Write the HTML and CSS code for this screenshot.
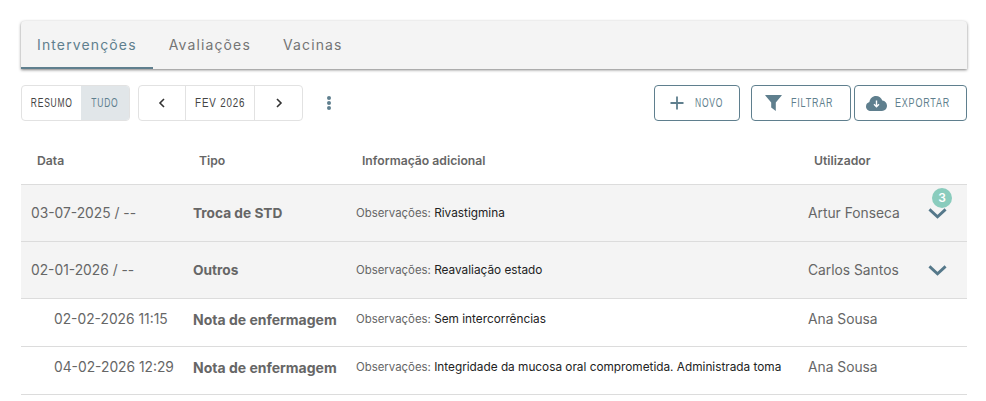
FILE: index.html
```html
<!DOCTYPE html>
<html>
<head>
    <meta charset="UTF-8">
    <link rel="stylesheet" href="styles.css">
</head>
<body>
<div class="tabs">
    <div class="tab tab-active">Intervenções</div>
    <div class="tab">Avaliações</div>
    <div class="tab">Vacinas</div>
</div>

<div class="toolbar">
    <div class="group">
        <div class="seg seg-resumo"><span class="cond">RESUMO</span></div>
        <div class="seg seg-tudo"><span class="cond">TUDO</span></div>
    </div>
    <div class="group group-date">
        <div class="seg seg-prev">
            <svg width="8" height="10" viewBox="0 0 8 10"><path d="M6 1 L2 5 L6 9" fill="none" stroke="#333" stroke-width="1.6"/></svg>
        </div>
        <div class="seg seg-month"><span class="cond cond-month">FEV 2026</span></div>
        <div class="seg seg-next">
            <svg width="8" height="10" viewBox="0 0 8 10"><path d="M2 1 L6 5 L2 9" fill="none" stroke="#333" stroke-width="1.6"/></svg>
        </div>
    </div>
    <div class="dots"><span></span><span></span><span></span></div>
    <div class="actions">
        <div class="btn btn-novo">
            <svg width="14" height="14" viewBox="0 0 14 14"><path d="M7 0.5 V13.5 M0.5 7 H13.5" stroke="#5f7f8e" stroke-width="1.8" fill="none"/></svg>
            <span class="cond cond-left">NOVO</span>
        </div>
        <div class="btn btn-filtrar">
            <svg width="17" height="16" viewBox="0 0 17 16"><path d="M0.5 0 H16.5 Q17 0 16.7 0.6 L10.8 7.5 V16 L6.2 12.5 V7.5 L0.3 0.6 Q0 0 0.5 0 Z" fill="#5f7f8e"/></svg>
            <span class="cond cond-left cond-wide">FILTRAR</span>
        </div>
        <div class="btn btn-exportar">
            <svg width="21" height="15" viewBox="0 0 21 15"><path d="M5 15 C2 15 0 13 0 10.4 C0 8.2 1.4 6.6 3.4 6 C3.9 2.6 6.6 0 10 0 C13 0 15.4 1.9 16.3 4.6 C19 4.9 21 7 21 9.8 C21 12.8 18.8 15 16 15 Z" fill="#5f7f8e"/><path d="M10.5 4.5 V10.5 M8 8.2 L10.5 10.7 L13 8.2" fill="none" stroke="#fff" stroke-width="1.4"/></svg>
            <span class="cond cond-left cond-wide">EXPORTAR</span>
        </div>
    </div>
</div>

<div class="row-head">
    <div class="c-data">Data</div>
    <div class="c-tipo">Tipo</div>
    <div class="c-info">Informação adicional</div>
    <div class="c-user">Utilizador</div>
</div>

<div class="row row-group">
    <div class="c-data">03-07-2025 / --</div>
    <div class="c-tipo">Troca de STD</div>
    <div class="c-info"><span class="lbl">Observações:</span> Rivastigmina</div>
    <div class="c-user">Artur Fonseca</div>
    <div class="c-toggle">
        <span class="badge">3</span>
        <svg width="20" height="11" viewBox="0 0 20 11"><path d="M1.5 1.2 L10 9 L18.5 1.2" fill="none" stroke="#55788a" stroke-width="3"/></svg>
    </div>
</div>
<div class="row row-group">
    <div class="c-data">02-01-2026 / --</div>
    <div class="c-tipo">Outros</div>
    <div class="c-info"><span class="lbl">Observações:</span> Reavaliação estado</div>
    <div class="c-user">Carlos Santos</div>
    <div class="c-toggle">
        <svg width="20" height="11" viewBox="0 0 20 11"><path d="M1.5 1.2 L10 9 L18.5 1.2" fill="none" stroke="#55788a" stroke-width="3"/></svg>
    </div>
</div>
<div class="row row-child">
    <div class="c-data">02-02-2026 11:15</div>
    <div class="c-tipo">Nota de enfermagem</div>
    <div class="c-info"><span class="lbl">Observações:</span> Sem intercorrências</div>
    <div class="c-user">Ana Sousa</div>
</div>
<div class="row row-child">
    <div class="c-data">04-02-2026 12:29</div>
    <div class="c-tipo">Nota de enfermagem</div>
    <div class="c-info"><span class="lbl">Observações:</span> Integridade da mucosa oral comprometida. Administrada toma</div>
    <div class="c-user">Ana Sousa</div>
</div>
</body>
</html>
```

FILE: styles.css
```css
* {
    margin: 0;
    padding: 0;
    box-sizing: border-box;
}

body {
    padding: 21px 19px 0 21px;
    background-color: #fff;
    font-family: "Inter", "Noto Sans", sans-serif;
    color: #666;
}

.tabs {
    display: flex;
    height: 48px;
    background-color: #f4f4f4;
    border-radius: 4px 4px 0 0;
    box-shadow: 0 1px 3px rgba(0, 0, 0, 0.5);
}

.tab {
    padding: 0 16px;
    line-height: 47px;
    font-size: 14px;
    letter-spacing: 1.13px;
    color: #757575;
}

.tab-active {
    color: #5f7f8e;
    border-bottom: 2px solid #5f7f8e;
}

.toolbar {
    display: flex;
    align-items: center;
    height: 36px;
    margin-top: 16px;
    font-family: "Liberation Sans", sans-serif;
    font-size: 12.5px;
    letter-spacing: 1.1px;
}

/* no condensed font installed, so squeeze the labels */
.cond {
    display: inline-block;
    white-space: nowrap;
    transform: scaleX(0.68);
}

.cond-month {
    transform: scaleX(0.78);
}

.cond-wide {
    transform: scaleX(0.72);
}

.cond-left {
    transform-origin: left center;
}

.group {
    display: flex;
    height: 36px;
    border: 1px solid #e2e2e2;
    border-radius: 4px;
    color: #444;
    overflow: hidden;
}

.group-date {
    margin-left: 8px;
}

.seg {
    display: flex;
    flex: none;
    align-items: center;
    justify-content: center;
    min-width: 0;
}

.seg-resumo {
    width: 59px;
}

.seg-tudo {
    width: 48px;
    background-color: #e1e6e9;
    color: #5f7f8e;
}

.seg-prev {
    width: 46px;
}

.seg-next {
    width: 47px;
}

.seg-month {
    width: 70px;
    border-left: 1px solid #e2e2e2;
    border-right: 1px solid #e2e2e2;
}

.dots {
    display: flex;
    flex-direction: column;
    gap: 1px;
    margin-left: 24px;
}

.dots span {
    width: 4px;
    height: 4px;
    border-radius: 50%;
    background-color: #5f7f8e;
}

.actions {
    display: flex;
    margin-left: auto;
}

.btn {
    display: flex;
    align-items: center;
    height: 36px;
    border: 1px solid #5f7f8e;
    border-radius: 4px;
    color: #5f7f8e;
}

.btn svg {
    flex: none;
}

.btn-novo {
    width: 86px;
    gap: 11px;
    margin-right: 11px;
    padding-left: 15px;
}

.btn-filtrar {
    width: 100px;
    gap: 9px;
    margin-right: 3px;
    padding-left: 13px;
}

.btn-exportar {
    width: 113px;
    gap: 8px;
    padding-left: 11px;
}

.row-head,
.row {
    display: grid;
    grid-template-columns: 172px 163px 452px 120px 39px;
    align-items: center;
}

.row-head {
    height: 47px;
    margin-top: 16px;
    font-size: 12.2px;
    font-weight: 600;
    color: #666;
}

.row-head .c-data {
    padding-left: 16px;
}

.row-head .c-tipo,
.row-head .c-info,
.row-head .c-user {
    padding-left: 6px;
}

.row {
    border-top: 1px solid #dcdcdc;
    font-size: 13.8px;
}

.row:last-child {
    height: 49px;
    border-bottom: 1px solid #dcdcdc;
}

.row-group {
    height: 57px;
    background-color: #f4f4f4;
}

.row-child {
    height: 48px;
    padding-bottom: 7px;
}

.row-group .c-data {
    padding-left: 10px;
}

.row-child .c-data {
    padding-left: 33px;
}

.row .c-tipo {
    font-size: 14px;
    font-weight: 700;
    white-space: nowrap;
}

.row-group .c-tipo {
    font-size: 13.7px;
}

.row .c-info {
    font-size: 11.8px;
    color: #222;
    white-space: nowrap;
}

.lbl {
    font-size: 11.4px;
    color: #666;
}

.c-toggle {
    position: relative;
    display: flex;
    align-items: center;
    justify-content: center;
    padding-right: 20px;
}

.badge {
    position: absolute;
    top: -20px;
    left: 4px;
    width: 20px;
    height: 20px;
    border-radius: 50%;
    background-color: #8accbd;
    color: #fff;
    font-size: 12px;
    font-weight: 600;
    line-height: 20px;
    text-align: center;
}
```
